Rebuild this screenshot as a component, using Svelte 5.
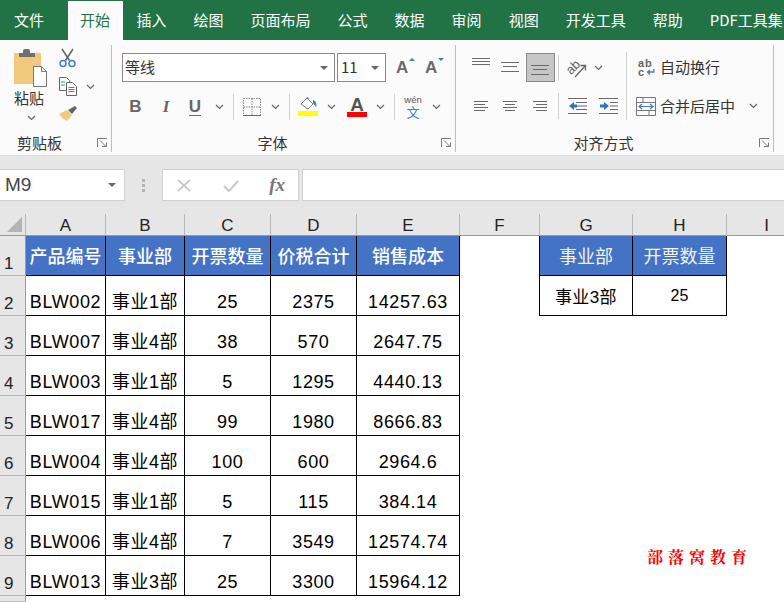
<script>
  const tabs = ['文件', '开始', '插入', '绘图', '页面布局', '公式', '数据', '审阅', '视图', '开发工具', '帮助', 'PDF工具集'];
  const cols = ['A', 'B', 'C', 'D', 'E', 'F', 'G', 'H', 'I'];
  const heads = ['产品编号', '事业部', '开票数量', '价税合计', '销售成本'];
  const rows = [
    ['BLW002', '事业1部', '25', '2375', '14257.63'],
    ['BLW007', '事业4部', '38', '570', '2647.75'],
    ['BLW003', '事业1部', '5', '1295', '4440.13'],
    ['BLW017', '事业4部', '99', '1980', '8666.83'],
    ['BLW004', '事业4部', '100', '600', '2964.6'],
    ['BLW015', '事业1部', '5', '115', '384.14'],
    ['BLW006', '事业4部', '7', '3549', '12574.74'],
    ['BLW013', '事业3部', '25', '3300', '15964.12']
  ];
</script>

{#snippet chev()}
  <svg class="chev" width="9" height="6" viewBox="0 0 9 6"><path d="M1 1l3.5 3.5L8 1" fill="none" stroke="#666" stroke-width="1.2" /></svg>
{/snippet}

{#snippet launcher()}
  <svg width="11" height="10" viewBox="0 0 11 10"><path d="M.5 9V.5H10M3 2.5l6 6M5 8.5h4.500V4.500" fill="none" stroke="#777" /></svg>
{/snippet}

{#snippet lines(ys, x1, x2)}
  <svg width="20" height="20" viewBox="0 0 20 20">
    {#each ys as y, i}
      <path d="M{x1[i]} {y}.5H{x2[i]}" stroke="#6a6a6a" />
    {/each}
  </svg>
{/snippet}

<div class="tabs">
  {#each tabs as t, i}
    <div class="tab" class:active={i === 1} class:first={i === 0}>{t}</div>
  {/each}
</div>

<div class="ribbon">
  <section class="group clip">
    <div class="clip-body">
      <div class="paste">
        <svg width="34" height="39" viewBox="0 0 34 39">
          <rect y="5" width="27" height="31" rx="1" fill="#f0c97c" />
          <path d="M5 9V5h4V3a2 2 0 0 1 2-2h3a2 2 0 0 1 2 2v2h5v4z" fill="#6f6f6f" />
          <path d="M19.500 18.500h8l5 5v15h-13z" fill="#fff" stroke="#777" />
          <path d="M27.500 18.500v5h5" fill="none" stroke="#777" />
        </svg>
        <span class="paste-label">粘贴</span>
        {@render chev()}
      </div>
      <div class="tools">
        <svg width="17" height="20" viewBox="0 0 17 20">
          <path d="M3 1l7.500 11.500M14 1L6.500 12.500" stroke="#666" stroke-width="1.600" fill="none" />
          <circle cx="4" cy="15.500" r="3" fill="none" stroke="#3f7fc4" stroke-width="1.500" />
          <circle cx="13" cy="15.500" r="3" fill="none" stroke="#3f7fc4" stroke-width="1.500" />
        </svg>
        <div class="copy-row">
          <svg width="18" height="19" viewBox="0 0 18 19">
            <path d="M.500.500h7l3 3v10h-10z" fill="#fff" stroke="#666" />
            <path d="M7.500 5.500h6l4 4v9h-10z" fill="#fff" stroke="#666" />
            <path d="M2 5h4M2 8h4M9.500 10.500h6M9.500 12.500h6M9.500 14.500h6" stroke="#3f7fc4" />
          </svg>
          {@render chev()}
        </div>
        <svg width="19" height="16" viewBox="0 0 19 16">
          <path d="M0 9l8-4 5 5-5 6-3-2-1 0z" fill="#f0c97c" />
          <path d="M9 5l7-4 2 2-5 6z" fill="#666" />
        </svg>
      </div>
    </div>
    <div class="label-row"><span class="label">剪贴板</span>{@render launcher()}</div>
  </section>

  <section class="group font">
    <div class="font-top">
      <div class="combo name"><span>等线</span><i class="tri"></i></div>
      <div class="combo size"><span>11</span><i class="tri"></i></div>
      <div class="grow up"><span>A</span><i class="caret"></i></div>
      <div class="grow down"><span>A</span><i class="caret"></i></div>
    </div>
    <div class="font-bottom">
      <b class="fmt">B</b>
      <b class="fmt italic">I</b>
      <b class="fmt under">U</b>
      {@render chev()}
      <i class="sep"></i>
      <svg width="18" height="18" viewBox="0 0 18 18">
        <path d="M.500.500h17v17H.500zM9 .5v17M.5 9h17" fill="none" stroke="#888" stroke-dasharray="1.500 1" />
        <path d="M0 17.500h18" stroke="#666" />
      </svg>
      {@render chev()}
      <i class="sep"></i>
      <div class="swatch">
        <svg width="20" height="14" viewBox="0 0 20 14">
          <path d="M3 7l6-6 6 6-5 5z" fill="#fff" stroke="#777" />
          <path d="M8 1l2-1 1 3M15 3c3 1 4 4 3 7-1-1-2-3-3-4z" fill="#3f7fc4" />
        </svg>
        <i class="yellow"></i>
      </div>
      {@render chev()}
      <div class="swatch">
        <b class="color-a">A</b>
        <i class="red"></i>
      </div>
      {@render chev()}
      <i class="sep"></i>
      <div class="wen"><small>wén</small><span>文</span></div>
      {@render chev()}
    </div>
    <div class="label-row"><span class="label">字体</span>{@render launcher()}</div>
  </section>

  <section class="group align">
    <div class="align-grid">
      <div class="cell">{@render lines([0, 3, 6], [1, 1, 1], [19, 19, 19])}</div>
      <div class="cell">{@render lines([4, 8, 13], [1, 3, 1], [19, 17, 19])}</div>
      <div class="cell selected">{@render lines([8, 12, 17], [1, 3, 1], [19, 17, 19])}</div>
      <i class="sep"></i>
      <div class="cell">
        <svg class="orient" width="22" height="22" viewBox="0 0 22 22">
          <text x="1" y="15" transform="rotate(-45 7 12)" class="ab">ab</text>
          <path d="M9 20L19 9M14.500 8.500H19.500V13.500" fill="none" stroke="#666" stroke-width="1.300" />
        </svg>
      </div>
      <div class="cell start">{@render chev()}</div>
      <i class="sep tall"></i>
      <div class="wrap">
        <div class="wrap-icon"><span>ab</span><span>c<svg width="9" height="7" viewBox="0 0 9 7"><path d="M8 0v3H2M4 1L1.500 3 4 5.500" fill="none" stroke="#3f7fc4" stroke-width="1.300" /></svg></span></div>
        <span class="rib-text">自动换行</span>
      </div>

      <div class="cell">{@render lines([5, 8, 11, 14], [3, 3, 3, 3], [17, 14, 17, 14])}</div>
      <div class="cell">{@render lines([5, 8, 11, 14], [3, 5, 3, 5], [17, 15, 17, 15])}</div>
      <div class="cell">{@render lines([5, 8, 11, 14], [3, 6, 3, 6], [17, 17, 17, 17])}</div>
      <i class="sep"></i>
      <div class="cell">
        <svg width="19" height="16" viewBox="0 0 19 16">
          <path d="M0 .5h19M8 4.500h11M8 8h11M8 11.500h11M0 15.500h19" stroke="#6a6a6a" />
          <path d="M1 8l5-4v2.500h3v3H6V12z" fill="#2f75c0" />
        </svg>
      </div>
      <div class="cell">
        <svg width="19" height="16" viewBox="0 0 19 16">
          <path d="M0 .5h19M11 4.500h8M11 8h8M11 11.500h8M0 15.500h19" stroke="#6a6a6a" />
          <path d="M10 8L5 4v2.500H1v3h4V12z" fill="#2f75c0" />
        </svg>
      </div>
      <div class="merge">
        <svg width="20" height="19" viewBox="0 0 20 19">
          <path d="M.500.500h19v18H.500zM.5 5.500h19M.5 13.500h19M7 .5v5M13 13.500v5" fill="none" stroke="#777" />
          <path d="M3 9.500h14M6 7L3 9.500 6 12M14 7l3 2.500-3 2.500" fill="none" stroke="#3f7fc4" stroke-width="1.200" />
        </svg>
        <span class="rib-text">合并后居中</span>
        {@render chev()}
      </div>
    </div>
    <div class="label-row"><span class="label">对齐方式</span>{@render launcher()}</div>
  </section>
</div>

<div class="formula">
  <div class="namebox"><span>M9</span><i class="tri"></i></div>
  <div class="grip"><i></i><i></i><i></i></div>
  <div class="fx-box">
    <svg width="16" height="15" viewBox="0 0 16 15"><path d="M2 2l12 11M14 2L2 13" stroke="#c8c8c8" stroke-width="1.800" /></svg>
    <svg width="18" height="15" viewBox="0 0 18 15"><path d="M2 8l5 5L16 3" fill="none" stroke="#c8c8c8" stroke-width="2" /></svg>
    <span class="fx">fx</span>
  </div>
  <div class="fx-input"></div>
</div>

<div class="sheet">
  <div class="corner"><i></i></div>
  {#each cols as c}
    <div class="col-head">{c}</div>
  {/each}

  <div class="row-head">1</div>
  {#each heads as h}
    <div class="cell-t head">{h}</div>
  {/each}
  <div class="cell-t gap"></div>
  <div class="cell-t head plain">事业部</div>
  <div class="cell-t head plain">开票数量</div>
  <div class="cell-t none"></div>

  {#each rows as r, i}
    <div class="row-head">{i + 2}</div>
    {#each r as v}
      <div class="cell-t data">{v}</div>
    {/each}
    {#if i === 0}
      <div class="cell-t gap"></div>
      <div class="cell-t mid name-cell">事业3部</div>
      <div class="cell-t mid">25</div>
      <div class="cell-t none"></div>
    {:else}
      <div class="cell-t none wide"></div>
    {/if}
  {/each}
  <div class="row-head short"></div>

  <div class="mark">部落窝教育</div>
</div>

<style>
  :global(body) {
    margin: 0;
    width: 784px;
    height: 602px;
    overflow: hidden;
    background: #fff;
    font-family: "Noto Sans CJK SC", "Liberation Sans", sans-serif;
  }

  i {
    font-style: normal;
  }

  .tabs {
    display: flex;
    height: 40px;
    background: #217346;
    white-space: nowrap;
    overflow: hidden;
  }
  .tab {
    flex: none;
    height: 39px;
    margin-top: 1px;
    padding: 0 13.5px;
    color: #fff;
    font-size: 15px;
    line-height: 37px;
  }
  .tab.first {
    padding-left: 14px;
    margin-right: 10.5px;
  }
  .tab.active {
    padding: 0 13px 0 12px;
    background: #fbfbfb;
    color: #217346;
  }

  .ribbon {
    display: flex;
    height: 115px;
    background: #fbfbfb;
    border-bottom: 1px solid #dcdcdc;
    color: #333;
    font-size: 15px;
  }
  .group {
    flex: none;
    display: flex;
    flex-direction: column;
    box-sizing: border-box;
    height: 107px;
    margin-top: 5px;
    border-right: 1px solid #bdbdbd;
  }
  .label-row {
    display: flex;
    align-items: center;
    justify-content: space-between;
    margin-top: auto;
    padding-right: 3px;
    height: 18px;
  }
  .label {
    flex: 1;
    margin-right: 18px;
    text-align: center;
    font-size: 15px;
    line-height: 18px;
    color: #333;
  }
  .chev {
    display: block;
    flex: none;
  }
  .sep {
    display: block;
    width: 1px;
    height: 26px;
    background: #d0d0d0;
    justify-self: center;
    flex: none;
  }

  .clip {
    width: 112px;
  }
  .clip-body {
    display: flex;
    padding-left: 14px;
  }
  .paste {
    width: 34px;
    display: flex;
    flex-direction: column;
    align-items: center;
    padding-top: 3px;
  }
  .paste-label {
    font-size: 15px;
    line-height: 20px;
    margin: 1px 4px 0 0;
    white-space: nowrap;
  }
  .paste .chev {
    margin-top: 7px;
  }
  .tools {
    display: flex;
    flex-direction: column;
    align-items: flex-start;
    gap: 9px;
    margin-left: 11px;
    padding-top: 3px;
  }
  .copy-row {
    display: flex;
    align-items: center;
    gap: 9px;
  }

  .font {
    width: 344px;
    padding-left: 10px;
  }
  .font-top {
    display: flex;
    align-items: center;
    margin-top: 8px;
    gap: 2px;
  }
  .combo {
    box-sizing: border-box;
    display: flex;
    align-items: center;
    justify-content: space-between;
    height: 29px;
    padding: 0 6px 0 2px;
    background: #fff;
    border: 1px solid #8a8a8a;
    font-size: 15px;
  }
  .combo span {
    padding-bottom: 2px;
  }
  .combo.name {
    width: 213px;
  }
  .combo.size {
    width: 49px;
    padding-left: 3px;
  }
  .tri {
    width: 0;
    height: 0;
    border-left: 4px solid transparent;
    border-right: 4px solid transparent;
    border-top: 4px solid #666;
  }
  .grow {
    position: relative;
    width: 16px;
    margin-left: 8px;
    color: #6a6a6a;
    font: bold 17px/20px "Liberation Sans", sans-serif;
  }
  .grow.down {
    margin-left: 11px;
  }
  .caret {
    position: absolute;
    right: -3px;
    top: 0;
    border-left: 3px solid transparent;
    border-right: 3px solid transparent;
  }
  .up .caret {
    border-bottom: 3px solid #3f7fc4;
  }
  .down .caret {
    border-top: 3px solid #3f7fc4;
  }

  .font-bottom {
    display: grid;
    grid-template-columns: 27px 34px 24px 24px 5px 31px 16px 12px 26px 20px 32px 14px 14px 24px 22px;
    align-items: center;
    justify-items: center;
    margin-top: 11px;
    height: 27px;
  }
  .fmt {
    font: bold 17px/20px "Liberation Sans", sans-serif;
    color: #666;
  }
  .italic {
    font-style: italic;
    font-family: "Liberation Serif", serif;
  }
  .under {
    border-bottom: 1.500px solid #6a6a6a;
    line-height: 17px;
  }
  .swatch {
    display: flex;
    flex-direction: column;
    align-items: center;
    width: 20px;
  }
  .yellow,
  .red {
    display: block;
    width: 20px;
    height: 5px;
    background: #ffff00;
  }
  .red {
    background: #ff0000;
  }
  .color-a {
    font: bold 19px/15px "Liberation Sans", sans-serif;
    color: #555;
    height: 15px;
  }
  .wen {
    display: flex;
    flex-direction: column;
    align-items: center;
    line-height: 1;
    color: #555;
  }
  .wen small {
    font: 9.500px/10px "Liberation Sans", sans-serif;
  }
  .wen span {
    font-size: 13px;
    line-height: 13px;
    color: #3f7fc4;
  }

  .align {
    width: 318px;
    padding-left: 10px;
  }
  .align-grid {
    display: grid;
    grid-template-columns: 29px 30px 30px 6px 32px 30px 6px 1fr;
    grid-template-rows: 30px 26px;
    row-gap: 10px;
    margin-top: 8px;
    align-items: center;
    justify-items: center;
  }
  .cell {
    display: flex;
    align-items: center;
    justify-content: center;
    height: 100%;
    width: 100%;
  }
  .cell.start {
    justify-content: flex-start;
    padding-left: 1px;
  }
  .cell svg {
    display: block;
    flex: none;
  }
  .selected {
    box-sizing: border-box;
    align-self: start;
    width: 29px;
    height: 29px;
    background: #c6c6c6;
    border: 1px solid #8a8a8a;
    padding-bottom: 1px;
  }
  .sep.tall {
    grid-row: 1 / 3;
    grid-column: 7;
    height: 68px;
  }
  .ab {
    font: 13px "Liberation Sans", sans-serif;
    fill: #666;
  }
  .orient {
    overflow: visible;
  }
  .wrap,
  .merge {
    justify-self: start;
    display: flex;
    align-items: center;
    white-space: nowrap;
    color: #333;
    font-size: 15px;
  }
  .rib-text {
    padding-bottom: 2px;
  }
  .wrap {
    margin-left: 9px;
    gap: 5px;
    grid-column: 8;
    grid-row: 1;
  }
  .wrap .rib-text {
    padding-bottom: 4px;
  }
  .wrap-icon {
    display: flex;
    flex-direction: column;
    width: 17px;
    font: bold 11px/9px "Liberation Sans", sans-serif;
    color: #666;
  }
  .wrap-icon span {
    display: flex;
    align-items: center;
    gap: 1px;
    letter-spacing: 1px;
  }
  .merge {
    margin-left: 7px;
    grid-column: 8;
    grid-row: 2;
  }
  .merge svg:first-child {
    margin-right: 4px;
  }
  .merge .chev {
    margin-left: 14px;
  }

  .formula {
    display: flex;
    align-items: center;
    height: 58px;
    box-sizing: border-box;
    background: #e6e6e6;
  }
  .namebox {
    box-sizing: border-box;
    display: flex;
    align-items: center;
    justify-content: space-between;
    width: 125px;
    height: 32px;
    padding: 0 8px 0 5px;
    background: #fff;
    border: 1px solid #d0d0d0;
    border-left: 0;
    color: #444;
    font: 19px "Liberation Sans", sans-serif;
  }
  .grip {
    display: flex;
    flex-direction: column;
    gap: 2px;
    width: 37px;
    align-items: center;
  }
  .grip i {
    width: 3px;
    height: 3px;
    background: #b4b4b4;
  }
  .fx-box {
    box-sizing: border-box;
    display: flex;
    align-items: center;
    justify-content: space-between;
    width: 137px;
    height: 32px;
    padding: 0 13px;
    background: #fff;
    border: 1px solid #d0d0d0;
  }
  .fx {
    font: italic bold 19px "Liberation Serif", serif;
    color: #777;
  }
  .fx-input {
    box-sizing: border-box;
    flex: 1;
    height: 32px;
    margin-left: 3px;
    background: #fff;
    border: 1px solid #d0d0d0;
    border-right: 0;
  }

  .sheet {
    position: relative;
    display: grid;
    grid-template-columns: 26px 80px 79px 86px 86px 103px 80px 93px 94px 80px;
    grid-template-rows: 22px repeat(9, 40px) 6px;
    color: #000;
    font-family: "Liberation Sans", "Noto Sans CJK SC", sans-serif;
    font-size: 18px;
  }
  .corner {
    position: relative;
    background: #e6e6e6;
    border-right: 1px solid #b8b8b8;
    border-bottom: 1px solid #9a9a9a;
    box-sizing: border-box;
  }
  .corner i {
    position: absolute;
    right: 3px;
    bottom: 3px;
    border-left: 15px solid transparent;
    border-bottom: 15px solid #b4b4b4;
  }
  .col-head {
    box-sizing: border-box;
    background: #e6e6e6;
    border-right: 1px solid #b8b8b8;
    border-bottom: 1px solid #9a9a9a;
    text-align: center;
    font-size: 17px;
    line-height: 23px;
    color: #222;
  }
  .row-head {
    box-sizing: border-box;
    display: flex;
    align-items: flex-end;
    padding: 0 0 1px 4px;
    background: #e6e6e6;
    border-right: 1px solid #9a9a9a;
    border-bottom: 1px solid #b8b8b8;
    font-size: 17px;
    line-height: 20px;
    color: #222;
  }
  .row-head.short {
    grid-column: 1;
  }
  .cell-t {
    box-sizing: border-box;
    display: flex;
    align-items: center;
    justify-content: center;
    white-space: nowrap;
    border-right: 1px solid #000;
    border-bottom: 1px solid #000;
  }
  .cell-t.none {
    border: 0;
  }
  .cell-t.none.wide {
    grid-column: span 4;
  }
  .cell-t.gap {
    border-bottom: 0;
  }
  .head {
    background: #4472c4;
    color: #fff;
    font-weight: 500;
    padding-bottom: 2px;
  }
  .head.plain {
    font-weight: 400;
    color: #f2f2f2;
  }
  .data {
    align-items: flex-end;
    padding-bottom: 2px;
    letter-spacing: 0.6px;
  }
  .mid {
    font-size: 16px;
  }
  .mid.name-cell {
    font-size: 17px;
    letter-spacing: 0.4px;
    padding-bottom: 1px;
  }
  .mark {
    position: absolute;
    left: 647px;
    top: 333px;
    color: #f00;
    font: bold 16px/20px "Noto Serif CJK SC", "Noto Sans CJK SC", serif;
    letter-spacing: 5px;
    white-space: nowrap;
  }
</style>
